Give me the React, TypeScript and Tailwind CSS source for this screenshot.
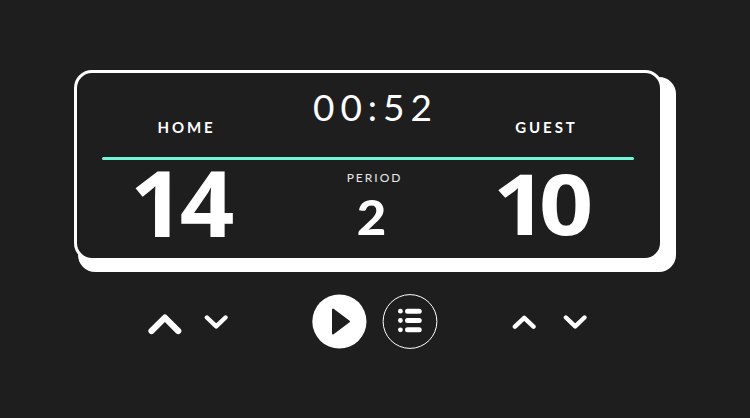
import type { ReactNode } from "react";

function Chevron({ down = false, large = false }: { down?: boolean; large?: boolean }) {
  if (large) {
    return (
      <button aria-label="Increase score" className="block">
        <svg width="34" height="22" viewBox="0 0 34 22" fill="none" stroke="white" strokeWidth="6.2" strokeLinecap="round" strokeLinejoin="round">
          <path d="M3.5 18 16.9 4.6 30.2 18" />
        </svg>
      </button>
    );
  }
  return (
    <button aria-label={down ? "Decrease score" : "Increase score"} className="block">
      <svg width="24" height="16" viewBox="0 0 24 16" fill="none" stroke="white" strokeWidth="4.4" strokeLinecap="round" strokeLinejoin="round">
        <path d={down ? "M2.9 3.5 12.2 12.4 21.5 3.5" : "M2.9 12.7 12.2 3.8 21.5 12.7"} />
      </svg>
    </button>
  );
}

function TeamLabel({ children }: { children: ReactNode }) {
  return <div className="-mr-[3px] pt-[47px] text-[15px] leading-none font-bold tracking-[2.9px]">{children}</div>;
}

export default function App() {
  return (
    <main className="h-[418px] w-[750px] overflow-hidden bg-[#1e1e1e] pt-[70px] pl-[74px] font-['Lato',sans-serif] text-white">
      <div className="grid h-[202px] w-[602px]">
        <div className="mt-[7px] ml-[4px] rounded-[17px] bg-white [grid-area:1/1]" />
        <section className="z-10 h-[191px] w-[589px] rounded-[18px] border-3 border-white bg-[#1e1e1e] [grid-area:1/1]">
          <div className="grid h-[84px] grid-cols-[168px_206px_140px] justify-items-center pl-6">
            <TeamLabel>HOME</TeamLabel>
            <div className="-mr-[7px] pt-[15px] text-[37px] leading-none tracking-[6px]">00:52</div>
            <TeamLabel>GUEST</TeamLabel>
          </div>
          <div className="ml-[25px] h-[3px] w-[532px] rounded-full bg-[#70f7da]" />
          <div className="grid h-[98px] grid-cols-[168px_206px_140px] justify-items-center pl-6">
            <div className="-mt-[3px] -translate-x-[4.7px] scale-x-105 font-['Open_Sans',sans-serif] text-[91px] leading-none font-bold tracking-[-4.5px]">14</div>
            <div className="flex flex-col items-center pt-3">
              <div className="-mr-[5px] text-[12px] leading-none tracking-[2px] text-white/90">PERIOD</div>
              <div className="mt-[9px] -translate-x-[0.5px] scale-x-106 text-[48px] leading-none font-black">2</div>
            </div>
            <div className="mt-px -translate-x-[6px] scale-x-113 font-['Open_Sans',sans-serif] text-[84px] leading-none font-bold tracking-[-7px]">10</div>
          </div>
        </section>
      </div>
      <div className="mt-[22px] flex h-[55px] items-center">
        <div className="ml-[74px] mt-[5px] flex w-[164px] items-center gap-[22px]">
          <Chevron large />
          <div className="-mt-[5px]"><Chevron down /></div>
        </div>
        <button aria-label="Play" className="block">
          <svg width="55" height="55" viewBox="0 0 55 55">
            <circle cx="27.4" cy="27.5" r="27.1" fill="white" />
            <path d="M21 15.5v24L37 27.5Z" fill="#1e1e1e" stroke="#1e1e1e" strokeWidth="2" strokeLinejoin="round" />
          </svg>
        </button>
        <button aria-label="Menu" className="ml-[15px] block">
          <svg width="56" height="55" viewBox="0 0 56 55" fill="white">
            <circle cx="28" cy="27.5" r="26.9" fill="none" stroke="white" strokeWidth="1" />
            <circle cx="18.4" cy="17.2" r="2.4" />
            <circle cx="18.4" cy="26.5" r="2.4" />
            <circle cx="18.4" cy="35.8" r="2.4" />
            <rect x="23" y="14.7" width="16.7" height="5" rx="2.5" />
            <rect x="23" y="24" width="16.7" height="5" rx="2.5" />
            <rect x="23" y="33.3" width="16.7" height="5" rx="2.5" />
          </svg>
        </button>
        <div className="ml-[74px] flex gap-[27px]">
          <Chevron />
          <Chevron down />
        </div>
      </div>
    </main>
  );
}
